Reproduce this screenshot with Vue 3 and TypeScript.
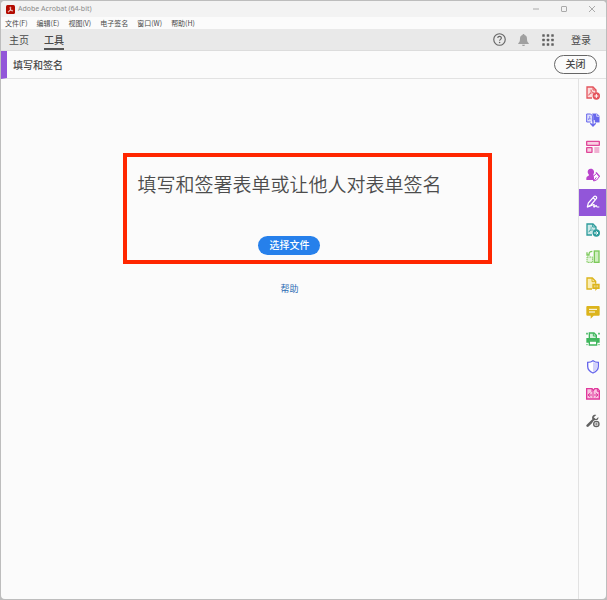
<script setup lang="ts">
import { ref } from 'vue'

interface Tool {
  id: string
  label: string
  color: string
}

const menus: string[] = ['文件(F)', '编辑(E)', '视图(V)', '电子签名', '窗口(W)', '帮助(H)']

const tools: Tool[] = [
  { id: 'create', label: '创建 PDF', color: '#e4545c' },
  { id: 'combine', label: '合并文件', color: '#6767ec' },
  { id: 'edit', label: '编辑 PDF', color: '#e0489a' },
  { id: 'request', label: '请求电子签名', color: '#b944cc' },
  { id: 'sign', label: '填写和签名', color: '#ffffff' },
  { id: 'export', label: '导出 PDF', color: '#2f9c9c' },
  { id: 'organize', label: '组织页面', color: '#7cc95a' },
  { id: 'review', label: '发送以供注释', color: '#dcb41c' },
  { id: 'comment', label: '注释', color: '#dcb41c' },
  { id: 'scan', label: '扫描和 OCR', color: '#3fb65c' },
  { id: 'protect', label: '保护', color: '#6767ec' },
  { id: 'compress', label: '优化 PDF', color: '#e0389c' },
  { id: 'more', label: '更多工具', color: '#626262' },
]

const activeTool = ref<string>('sign')
</script>

<template>
  <div class="desktop">
    <div class="window">
      <header class="titlebar">
        <svg class="logo" viewBox="0 0 18 18" aria-hidden="true">
          <rect width="18" height="18" rx="3" fill="#b30b00" />
          <path
            d="M8.7 3.8c1.2 0 .9 2.6.1 5-.8 2.2-2.6 5.2-3.9 5.2-1.3 0-.5-1.9 2.6-2.9 2.3-.8 5.8-1 6.2.2.3 1-1.5 1.1-3 .1C8.9 10.2 7.3 3.8 8.7 3.8z"
            fill="none" stroke="#fff" stroke-width="1.3"
          />
        </svg>
        <span class="app-name">Adobe Acrobat (64-bit)</span>
        <div class="window-controls">
          <button type="button" aria-label="最小化">
            <svg viewBox="0 0 8 8"><path d="M1 4h6" /></svg>
          </button>
          <button type="button" aria-label="最大化">
            <svg viewBox="0 0 8 8"><rect x="1.5" y="1.5" width="5" height="5" rx=".5" /></svg>
          </button>
          <button type="button" aria-label="关闭窗口">
            <svg viewBox="0 0 8 8"><path d="M1 1l6 6M7 1L1 7" /></svg>
          </button>
        </div>
      </header>

      <nav class="menubar">
        <button v-for="menu in menus" :key="menu" type="button">{{ menu }}</button>
      </nav>

      <div class="tabbar">
        <nav class="tabs">
          <a href="#home">主页</a>
          <a href="#tools" class="current">工具</a>
        </nav>
        <div class="account">
          <button type="button" aria-label="帮助中心">
            <svg class="help-icon" viewBox="0 0 26 26">
              <circle cx="13" cy="13" r="11.5" fill="none" stroke="#666" stroke-width="2.3" />
              <path d="M9.5 10.2c0-4.4 7.2-4.4 7.2-.2 0 2.6-3.5 2.8-3.5 5.6" fill="none" stroke="#666" stroke-width="2.3" />
              <circle cx="13.2" cy="18.9" r="1.5" fill="#666" />
            </svg>
          </button>
          <button type="button" aria-label="通知">
            <svg class="bell-icon" viewBox="0 0 22 24">
              <path d="M11 0c1.4 0 2 1 2 2.2 3.5.9 5 3.6 5 7.3 0 5.5 1.5 7 3.5 8.8V20H.5v-1.7C2.5 16.5 4 15 4 9.5c0-3.7 1.5-6.4 5-7.3C9 1 9.6 0 11 0zM8 21.3h6c0 3.6-6 3.6-6 0z" fill="#a0a0a0" />
            </svg>
          </button>
          <button type="button" aria-label="应用程序">
            <svg class="grid-icon" viewBox="0 0 24 24" fill="#606060">
              <template v-for="row in 3" :key="row">
                <rect v-for="col in 3" :key="col" :x="col * 9 - 8.5" :y="row * 9 - 8.5" width="5" height="5" rx="1" />
              </template>
            </svg>
          </button>
          <button type="button" class="login">登录</button>
        </div>
      </div>

      <div class="toolbar">
        <h1>填写和签名</h1>
        <button type="button" class="close">关闭</button>
      </div>

      <div class="body">
        <main>
          <section class="hero">
            <h2>填写和签署表单或让他人对表单签名</h2>
            <button type="button" class="choose">选择文件</button>
            <div class="highlight" aria-hidden="true"></div>
          </section>
          <a class="help" href="#help">帮助</a>
        </main>

        <aside class="rail">
          <div class="tools">
            <button
              v-for="tool in tools"
              :key="tool.id"
              type="button"
              :aria-label="tool.label"
              :class="{ active: tool.id === activeTool }"
              :style="{ color: tool.color }"
              @click="activeTool = tool.id"
            >
              <svg viewBox="0 0 42 42" fill="none" stroke="currentColor" stroke-width="4">
                <g v-if="tool.id === 'create'">
                  <path d="M18 36H3V3h18l9 9v8" fill="#fbdcdd" />
                  <path d="M21 3v9h9" stroke-width="3" />
                  <path d="M15 11c3 5-4 16-7 17-3-3 9-9 16-7-4 1-9-6-9-10z" stroke-width="2" />
                  <circle cx="31" cy="30" r="11" fill="currentColor" stroke="none" />
                  <path d="M31 24v12M25 30h12" stroke="#fff" stroke-width="3" />
                </g>
                <g v-else-if="tool.id === 'combine'">
                  <path d="M14 27H2V3h12l6 6v16" fill="#dedffb" stroke-width="3" />
                  <path d="M19 2h14l7 7v19H27v-7h-5V9z" fill="currentColor" stroke-width="1" />
                  <path d="M32 2v8h8" stroke="#fff" stroke-width="2" />
                  <path d="M11 9c2 4-2 9-5 11 3-3 7-3 10-2" stroke-width="2" />
                  <path d="M21 22v16M13 31l8 8 8-8" />
                </g>
                <g v-else-if="tool.id === 'edit'" fill="#f9cfe2">
                  <rect x="2" y="4" width="38" height="12" rx="1" />
                  <rect x="2" y="23" width="16" height="14" rx="1" />
                  <path d="M25 24h15M25 30h15M25 36h15" stroke-width="2.5" />
                </g>
                <g v-else-if="tool.id === 'request'">
                  <path d="M14 2c9 0 12 8 9 15-2 4-1 5 3 7v12H1v-6c0-5 7-5 8-8 1-2-4-5-4-10 0-6 3-10 9-10z" fill="currentColor" stroke="none" />
                  <path d="M23 39l-1-14 10-9 8 10-8 10zM23 39l8-11" fill="#fff" stroke-width="3" />
                  <path d="M30 13l11 13" />
                </g>
                <g v-else-if="tool.id === 'sign'" stroke-linejoin="round" stroke-width="3.5">
                  <path d="M4 36l3-12L24 5c4-4 10 1 7 6L15 30zM4 36l11-6M22 9l7 6" />
                  <path d="M4 36c10-1 15-8 20-7 3 1-3 7 0 7s4-5 7-4c2 1 0 4 3 4h6" />
                </g>
                <g v-else-if="tool.id === 'export'">
                  <path d="M18 36H3V3h18l9 9v8" fill="#cde9e8" />
                  <path d="M20 3v9h9" stroke-width="3" />
                  <path d="M15 11c3 5-3 13-7 16 3-4 9-7 14-6" stroke-width="2" />
                  <circle cx="31" cy="30" r="11" fill="currentColor" stroke="none" />
                  <path d="M24 30h12M31 25l5 5-5 5" stroke="#fff" stroke-width="3" />
                </g>
                <g v-else-if="tool.id === 'organize'">
                  <rect x="25" y="3" width="14" height="34" fill="#cfeec0" />
                  <path d="M3 21h17v16H3z" stroke-dasharray="5 2" stroke-width="3" fill="#e5f5dd" />
                  <path d="M19 4C14 4 9 6 9 13M3 7v8h8" />
                </g>
                <g v-else-if="tool.id === 'review'">
                  <path d="M18 36H3V3h16l10 10v7" fill="#faedb4" />
                  <path d="M18 3v11h11" stroke-width="3" />
                  <path d="M19 20h22v16h-8l-5 6v-6h-9z" fill="currentColor" stroke="none" />
                  <path d="M25 25v6M30 25v6M35 25v6" stroke="#fff" stroke-width="1.5" />
                </g>
                <g v-else-if="tool.id === 'comment'">
                  <path d="M4 3h34q3 0 3 3v23q0 3-3 3H23l-9 9v-9H4q-3 0-3-3V6q0-3 3-3z" fill="currentColor" stroke="none" />
                  <path d="M9 13h24M9 21h18" stroke="#fff" stroke-width="3" />
                </g>
                <g v-else-if="tool.id === 'scan'">
                  <path d="M10 18V3h14l7 7v8" fill="#d5f1dc" />
                  <path d="M22 3v9h9" stroke-width="3" />
                  <path d="M1 18h40v14h-8v-6H9v6H1z" fill="currentColor" stroke="none" />
                  <path d="M10 27h22v12H10z" fill="#fff" />
                  <path d="M1 5h4M37 5h4M3 2v6M39 2v6M1 38h4M37 38h4" stroke-width="3" />
                </g>
                <g v-else-if="tool.id === 'protect'">
                  <path d="M21 2c5 4 10 5 16 5v12c0 10-6 16-16 20C11 35 5 29 5 19V7c6 0 11-1 16-5z" fill="#fff" />
                  <path d="M21 7c4 2 9 3 13 3v9c0 8-5 13-13 17z" fill="#d2d2fa" stroke="none" />
                </g>
                <g v-else-if="tool.id === 'compress'">
                  <path d="M2 5h16l4 5 4-5h9l5 6v25H2z" fill="#f9c5e2" />
                  <path d="M18 5v10M34 5v8h6M7 24h11M24 24h11M13 18l-7 6 7 6M29 18l7 6-7 6M21 13v19" stroke-width="3" />
                </g>
                <g v-else>
                  <path d="M5 35L21 19" stroke-width="8" stroke-linecap="round" />
                  <path d="M31 3c-8-3-15 4-12 12 2 6 8 7 13 4 4-2 6-6 5-10l-7 7-7-6z" fill="currentColor" stroke="none" />
                  <circle cx="31" cy="30" r="12" fill="#fbfbfb" stroke="none" />
                  <circle cx="31" cy="30" r="8" />
                  <path d="M31 25v10M26 30h10" stroke-width="2" />
                </g>
              </svg>
            </button>
          </div>
        </aside>
      </div>
    </div>
  </div>
</template>

<style>
body {
  margin: 0;
  background: #bdbdbd;
}
</style>

<style scoped>
.desktop {
  box-sizing: border-box;
  display: flex;
  min-height: 100vh;
  padding: 1px;
  background: #bdbdbd;
  font-family: 'Noto Sans', 'Noto Sans CJK SC', sans-serif;
  color: #4a4a4a;
}

.window {
  flex: 1;
  display: flex;
  flex-direction: column;
  overflow: hidden;
  border-radius: 4px;
  background: #fbfbfb;
}

button {
  margin: 0;
  padding: 0;
  border: 0;
  background: none;
  color: inherit;
  font: inherit;
  cursor: pointer;
}

a {
  color: inherit;
  text-decoration: none;
}

svg {
  display: block;
}

.titlebar {
  display: flex;
  align-items: center;
  height: 16px;
  padding: 0 10px 0 5px;
  background: #f3f3f3;
}

.logo {
  width: 9px;
  height: 9px;
}

.app-name {
  margin-left: 3px;
  color: #8a8a8a;
  font-size: 7px;
  line-height: 16px;
}

.window-controls {
  display: flex;
  gap: 20px;
  margin-left: auto;
}

.window-controls svg {
  width: 8px;
  height: 8px;
  fill: none;
  stroke: #aaa;
  stroke-width: 1;
}

.menubar {
  display: flex;
  gap: 9px;
  height: 12px;
  padding-left: 4px;
  font-family: 'Noto Sans CJK SC', sans-serif;
  font-size: 7px;
  line-height: 12px;
}

.tabbar {
  display: flex;
  justify-content: space-between;
  height: 21px;
  padding: 0 15px 0 8px;
  border-bottom: 1px solid #dcdcdc;
  background: #e9e9e9;
  font-size: 10px;
  line-height: 22px;
}

.tabs {
  display: flex;
  gap: 15px;
}

.tabs a {
  box-sizing: border-box;
  height: 21px;
}

.tabs .current {
  border-bottom: 2px solid #555;
  font-weight: 500;
}

.account {
  display: flex;
  align-items: center;
}

.help-icon {
  width: 13px;
  height: 13px;
}

.bell-icon {
  width: 11px;
  height: 12px;
  margin-left: 12px;
}

.grid-icon {
  width: 12px;
  height: 12px;
  margin-left: 13px;
}

.login {
  margin-left: 17px;
}

.toolbar {
  display: flex;
  align-items: center;
  justify-content: space-between;
  height: 27px;
  padding: 0 9px 0 6px;
  border-bottom: 1px solid #e2e2e2;
  border-left: 6px solid #9256d9;
}

.toolbar h1 {
  margin: 0;
  font-size: 10px;
  font-weight: 500;
}

.close {
  box-sizing: border-box;
  width: 43px;
  height: 19px;
  border: 1px solid #666;
  border-radius: 10px;
  font-size: 10px;
  font-weight: 500;
  line-height: 17px;
}

.body {
  flex: 1;
  display: flex;
}

main {
  flex: 1;
  display: flex;
  flex-direction: column;
  align-items: center;
  padding-top: 92px;
}

.hero {
  position: relative;
  display: flex;
  flex-direction: column;
  align-items: center;
}

.hero h2 {
  margin: 0;
  color: #4c4c4c;
  font-size: 19px;
  font-weight: 350;
  line-height: 28px;
}

.choose {
  height: 19px;
  margin-top: 37px;
  padding: 0 11px;
  border-radius: 10px;
  background: #2680eb;
  color: #fff;
  font-size: 10px;
  font-weight: 500;
  line-height: 19px;
}

.highlight {
  position: absolute;
  inset: -18px -50px -9px -14px;
  border: 4px solid #ff2600;
  pointer-events: none;
}

.help {
  margin-top: 26px;
  color: #2b6cb4;
  font-size: 9px;
  line-height: 16px;
}

.rail {
  width: 27px;
  border-left: 1px solid #e2e2e2;
}

.tools {
  display: grid;
  grid-auto-rows: 1fr;
  height: 356px;
}

.rail button {
  display: grid;
  place-items: center;
}

.rail .active {
  background: #9256d9;
}

.rail svg {
  width: 14px;
  height: 14px;
}
</style>
